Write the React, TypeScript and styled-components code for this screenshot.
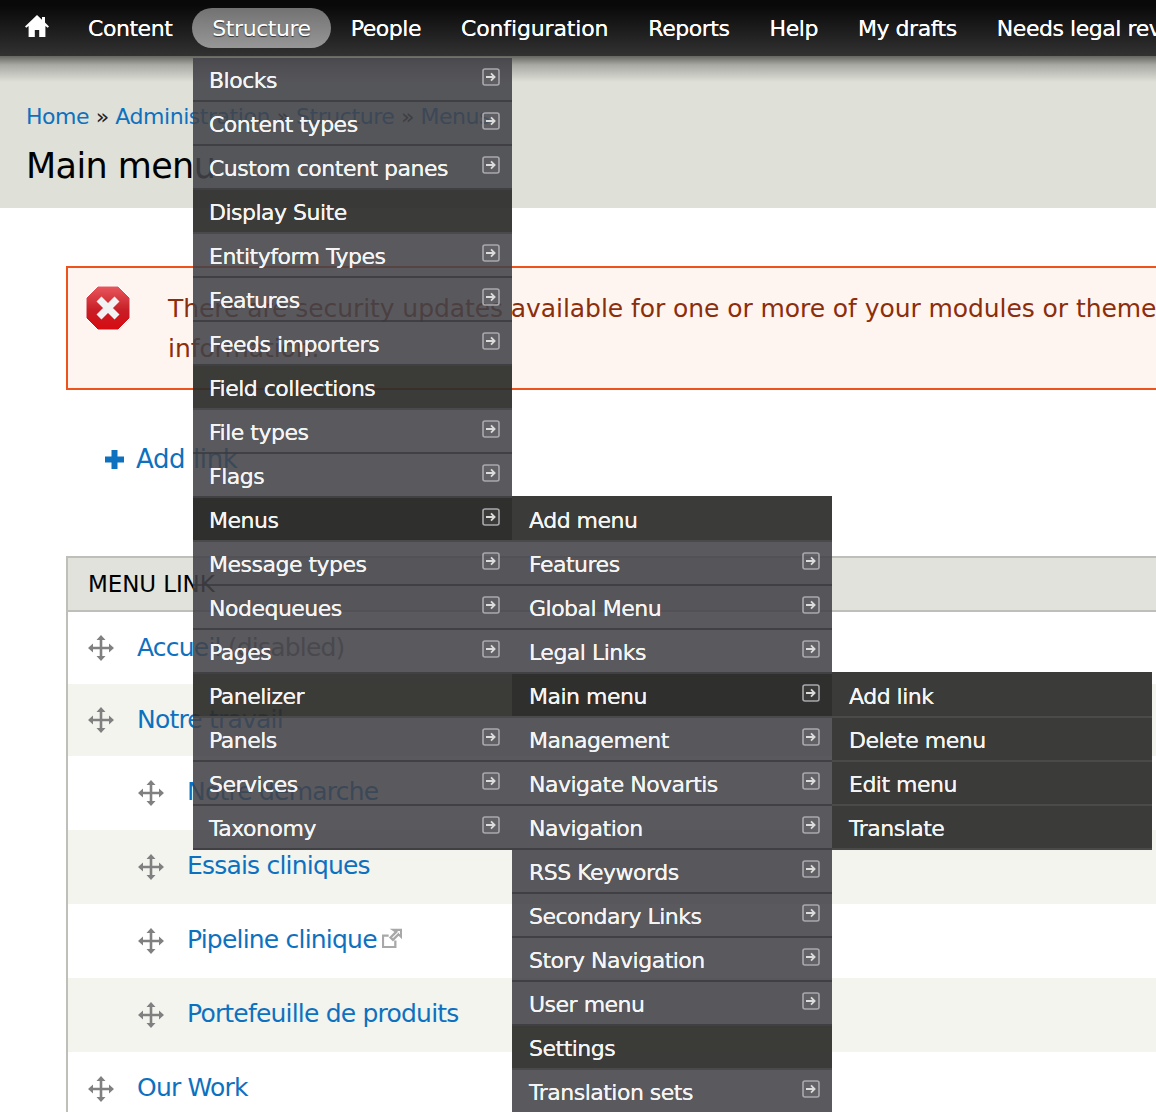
import React from 'react';
import styled, { createGlobalStyle } from 'styled-components';

const FONT = `'DejaVu Sans', Verdana, sans-serif`;

type MenuItem = {
  label: string;
  arrow?: boolean;
  dark?: boolean;
  active?: boolean;
  children?: MenuItem[];
};

const linkItems: MenuItem[] = [
  { label: 'Add link' },
  { label: 'Delete menu' },
  { label: 'Edit menu' },
  { label: 'Translate' },
];

const menuItems: MenuItem[] = [
  { label: 'Add menu', dark: true },
  { label: 'Features', arrow: true },
  { label: 'Global Menu', arrow: true },
  { label: 'Legal Links', arrow: true },
  { label: 'Main menu', arrow: true, active: true, children: linkItems },
  { label: 'Management', arrow: true },
  { label: 'Navigate Novartis', arrow: true },
  { label: 'Navigation', arrow: true },
  { label: 'RSS Keywords', arrow: true },
  { label: 'Secondary Links', arrow: true },
  { label: 'Story Navigation', arrow: true },
  { label: 'User menu', arrow: true },
  { label: 'Settings', dark: true },
  { label: 'Translation sets', arrow: true },
];

const structureItems: MenuItem[] = [
  { label: 'Blocks', arrow: true },
  { label: 'Content types', arrow: true },
  { label: 'Custom content panes', arrow: true },
  { label: 'Display Suite', dark: true },
  { label: 'Entityform Types', arrow: true },
  { label: 'Features', arrow: true },
  { label: 'Feeds importers', arrow: true },
  { label: 'Field collections', dark: true },
  { label: 'File types', arrow: true },
  { label: 'Flags', arrow: true },
  { label: 'Menus', arrow: true, active: true, children: menuItems },
  { label: 'Message types', arrow: true },
  { label: 'Nodequeues', arrow: true },
  { label: 'Pages', arrow: true },
  { label: 'Panelizer', dark: true },
  { label: 'Panels', arrow: true },
  { label: 'Services', arrow: true },
  { label: 'Taxonomy', arrow: true },
];

const tableRows = [
  { label: 'Accueil', note: ' (disabled)', depth: 0 },
  { label: 'Notre travail', depth: 0 },
  { label: 'Notre demarche', depth: 1 },
  { label: 'Essais cliniques', depth: 1 },
  { label: 'Pipeline clinique', depth: 1, external: true },
  { label: 'Portefeuille de produits', depth: 1 },
  { label: 'Our Work', depth: 0 },
];

const navLinks = ['Content', 'Structure', 'People', 'Configuration', 'Reports', 'Help', 'My drafts', 'Needs legal review'];

const GlobalStyle = createGlobalStyle`
  html, body {
    margin: 0;
    padding: 0;
    background: #fff;
    overflow: hidden;
  }
  body {
    width: 1156px;
    height: 1112px;
    font-family: ${FONT};
  }
`;

const Page = styled.div`
  position: relative;
  width: 1156px;
  height: 1112px;
  overflow: hidden;
`;

const Toolbar = styled.nav`
  display: flex;
  align-items: center;
  height: 56px;
  padding-left: 25px;
  background: linear-gradient(#090909 10%, #323232);
  white-space: nowrap;
`;

const HomeLink = styled.a`
  display: flex;
  width: 24px;
  margin-right: 19px;
  margin-top: -4px;
`;

const NavItem = styled.a<{ $open?: boolean; $wide?: boolean }>`
  position: relative;
  flex: none;
  height: 40px;
  padding: 0 20px;
  border-radius: 20px;
  font-size: 22px;
  line-height: 42px;
  letter-spacing: ${(p) => (p.$wide ? '-0.15px' : '-0.45px')};
  color: #fff;
  margin-top: -1px;
  background: ${(p) => (p.$open ? 'linear-gradient(#727272, #979797)' : 'transparent')};
  text-shadow: ${(p) => (p.$open ? '0 1px 1px #333' : '0 0 0.5px #fff')};
`;

const Head = styled.header`
  height: 152px;
  padding: 45px 26px 0;
  box-sizing: border-box;
  background: linear-gradient(#666660 0, #a8a9a2 9px, #dfe0d8 26px);
`;

const Breadcrumb = styled.div`
  font-size: 22px;
  line-height: 32px;
  letter-spacing: -0.45px;
  color: #222;
  white-space: nowrap;
`;

const Crumb = styled.a`
  color: #0d71c0;
`;

const Title = styled.h1`
  margin: 11px 0 0;
  font-size: 35px;
  line-height: 44px;
  font-weight: 400;
  letter-spacing: -0.6px;
  color: #000;
`;

const Content = styled.main`
  padding: 58px 0 0 66px;
`;

const Message = styled.div`
  display: flex;
  width: 1200px;
  height: 124px;
  box-sizing: border-box;
  border: 2px solid #ed541d;
  background: #fef5f1;
  color: #8c2e0b;
  font-size: 25px;
  line-height: 40px;
  letter-spacing: -0.07px;
  white-space: nowrap;
`;

const MessageIcon = styled.svg`
  flex: none;
  width: 46px;
  height: 46px;
  margin: 17px 0 0 17px;
`;

const MessageText = styled.div`
  padding: 21px 0 0 37px;
`;

const AddLink = styled.a`
  display: flex;
  align-items: center;
  gap: 12px;
  height: 40px;
  margin: 49px 0 0 39px;
  color: #0d71c0;
  font-size: 26px;
  letter-spacing: -0.4px;
`;

const PlusIcon = styled.svg`
  width: 19px;
  height: 19px;
`;

const Table = styled.section`
  width: 1200px;
  margin-top: 77px;
  border-left: 2px solid #bebfb9;
  border-top: 2px solid #bebfb9;
`;

const TableHead = styled.div`
  height: 52px;
  padding-left: 20px;
  line-height: 53px;
  background: #e1e2dc;
  border-bottom: 2px solid #bebfb9;
  color: #000;
  font-size: 23px;
  letter-spacing: -0.1px;
`;

const Row = styled.div<{ $even: boolean; $tall: boolean }>`
  display: flex;
  align-items: center;
  height: ${(p) => (p.$tall ? 74 : 72)}px;
  background: ${(p) => (p.$even ? '#f3f4ee' : '#fff')};
`;

const Indent = styled.div<{ $depth: number }>`
  display: flex;
  align-items: center;
  padding-left: ${(p) => 19 + p.$depth * 50}px;
`;

const Handle = styled.svg`
  flex: none;
  width: 28px;
  height: 28px;
  margin-right: 22px;
  filter: blur(0.3px);
`;

const RowLink = styled.a<{ $tall: boolean }>`
  padding-bottom: ${(p) => (p.$tall ? 3 : 1)}px;
  color: #0d71c0;
  font-size: 25px;
  letter-spacing: -0.8px;
  white-space: nowrap;
`;

const RowNote = styled.span`
  color: #777;
`;

const ExternalIcon = styled.svg`
  width: 20px;
  height: 20px;
  margin: -6px 0 0 5px;
`;

const Flyout = styled.ul<{ $top: boolean }>`
  position: absolute;
  z-index: 5;
  left: ${(p) => (p.$top ? '193px' : '100%')};
  top: ${(p) => (p.$top ? '58px' : '-2px')};
  width: ${(p) => (p.$top ? 319 : 320)}px;
  margin: 0;
  padding: 0;
  list-style: none;
  & > li {
    padding-left: ${(p) => (p.$top ? 16 : 17)}px;
  }
  & > li:first-child {
    padding-top: ${(p) => (p.$top ? 0 : 2)}px;
  }
`;

const FlyoutRow = styled.li<{ $tone: 'plain' | 'dark' | 'active' | 'leaf' }>`
  position: relative;
  display: flex;
  align-items: center;
  justify-content: space-between;
  height: 42px;
  box-sizing: content-box;
  padding-right: 12px;
  border-bottom: 2px solid ${(p) => (p.$tone === 'plain' ? 'rgba(58, 58, 62, 0.8)' : '#4a4a4a')};
  color: #f4f4f4;
  font-size: 22px;
  letter-spacing: -0.5px;
  text-shadow: 0 0 0.5px #fff;
  white-space: nowrap;
  background: ${(p) =>
    ({
      plain: 'rgba(66, 66, 72, 0.88)',
      dark: 'rgba(44, 44, 42, 0.93)',
      active: 'rgba(36, 36, 34, 0.95)',
      leaf: '#3b3b39',
    })[p.$tone]};
`;

const RowLabel = styled.span`
  padding-top: 2px;
`;

const ArrowIcon = styled.svg`
  flex: none;
  width: 18px;
  height: 18px;
  margin-top: -5px;
`;

const Arrow = () => (
  <ArrowIcon viewBox="0 0 18 18" fill="none">
    <rect x="1" y="1" width="16" height="16" rx="2" stroke="#a9a9ad" strokeWidth="1.6" fill="rgba(255,255,255,0.06)" />
    <path d="M4 9h8M9 5.400 12.600 9 9 12.600" stroke="#dcdcdc" strokeWidth="1.8" />
  </ArrowIcon>
);

const Flyouts: React.FC<{ items: MenuItem[]; top?: boolean }> = ({ items, top = false }) => (
  <Flyout $top={top}>
    {items.map((item) => (
      <FlyoutRow
        key={item.label}
        $tone={item.active ? 'active' : item.dark ? 'dark' : items === linkItems ? 'leaf' : 'plain'}
      >
        <RowLabel>{item.label}</RowLabel>
        {item.arrow && <Arrow />}
        {item.children && <Flyouts items={item.children} />}
      </FlyoutRow>
    ))}
  </Flyout>
);

const App: React.FC = () => (
  <Page>
    <GlobalStyle />
    <Toolbar>
      <HomeLink>
        <svg width="24" height="22" viewBox="0 0 24 22" fill="#fff">
          <path d="M12 0 0 11.400l1.300 1.400L3.600 11v11h6.200v-7h4.400v7h6.200V11l2.300 1.800 1.300-1.400-4-3.800V2h-3v2.800z" />
        </svg>
      </HomeLink>
      {navLinks.map((link) => (
        <NavItem key={link} $open={link === 'Structure'} $wide={link === 'Configuration'}>
          {link}
        </NavItem>
      ))}
    </Toolbar>
    <Head>
      <Breadcrumb>
        <Crumb>Home</Crumb> » <Crumb>Administration</Crumb> » <Crumb>Structure</Crumb> » <Crumb>Menus</Crumb>
      </Breadcrumb>
      <Title>Main menu</Title>
    </Head>
    <Content>
      <Message>
        <MessageIcon viewBox="0 0 46 46">
          <defs>
            <linearGradient id="stop" x1="0" y1="0" x2="0" y2="1">
              <stop offset="0" stopColor="#e8585e" />
              <stop offset="0.55" stopColor="#c81e26" />
              <stop offset="1" stopColor="#d80a10" />
            </linearGradient>
          </defs>
          <path d="M13 1h20l12 12v20L33 45H13L1 33V13z" fill="url(#stop)" stroke="#fff" strokeWidth="1" />
          <path d="M14 14l18 18M32 14 14 32" stroke="#f2f2f2" strokeWidth="7" />
        </MessageIcon>
        <MessageText>
          There are security updates available for one or more of your modules or themes
          <br />
          information.
        </MessageText>
      </Message>
      <AddLink>
        <PlusIcon viewBox="0 0 19 19" fill="#0d71c0">
          <path d="M6.500 0h6v6.500H19v6h-6.500V19h-6v-6.500H0v-6h6.500z" />
        </PlusIcon>
        Add link
      </AddLink>
      <Table>
        <TableHead>MENU LINK</TableHead>
        {tableRows.map((row, i) => (
          <Row key={row.label} $even={i % 2 === 1} $tall={i > 1}>
            <Indent $depth={row.depth}>
              <Handle viewBox="0 0 28 28" fill="#808080">
                <path d="M14 1l4.500 5h-3.200v6.700H22V9.500l5 4.500-5 4.500v-3.200h-6.700V22h3.200L14 27l-4.500-5h3.200v-6.700H6v3.200L1 14l5-4.500v3.200h6.700V6H9.500z" />
              </Handle>
              <RowLink $tall={i > 1}>
                {row.label}
                {row.note && <RowNote>{row.note}</RowNote>}
              </RowLink>
              {row.external && (
                <ExternalIcon viewBox="0 0 21 21" fill="none" stroke="#a8a8a8" strokeWidth="2.400">
                  <path d="M14 13v7H1V8h6" />
                  <path d="M12 2h8v7l-2.500-2.500-6 6-2.500-2.500 6-6z" fill="#fff" />
                </ExternalIcon>
              )}
            </Indent>
          </Row>
        ))}
      </Table>
    </Content>
    <Flyouts items={structureItems} top />
  </Page>
);

export default App;
